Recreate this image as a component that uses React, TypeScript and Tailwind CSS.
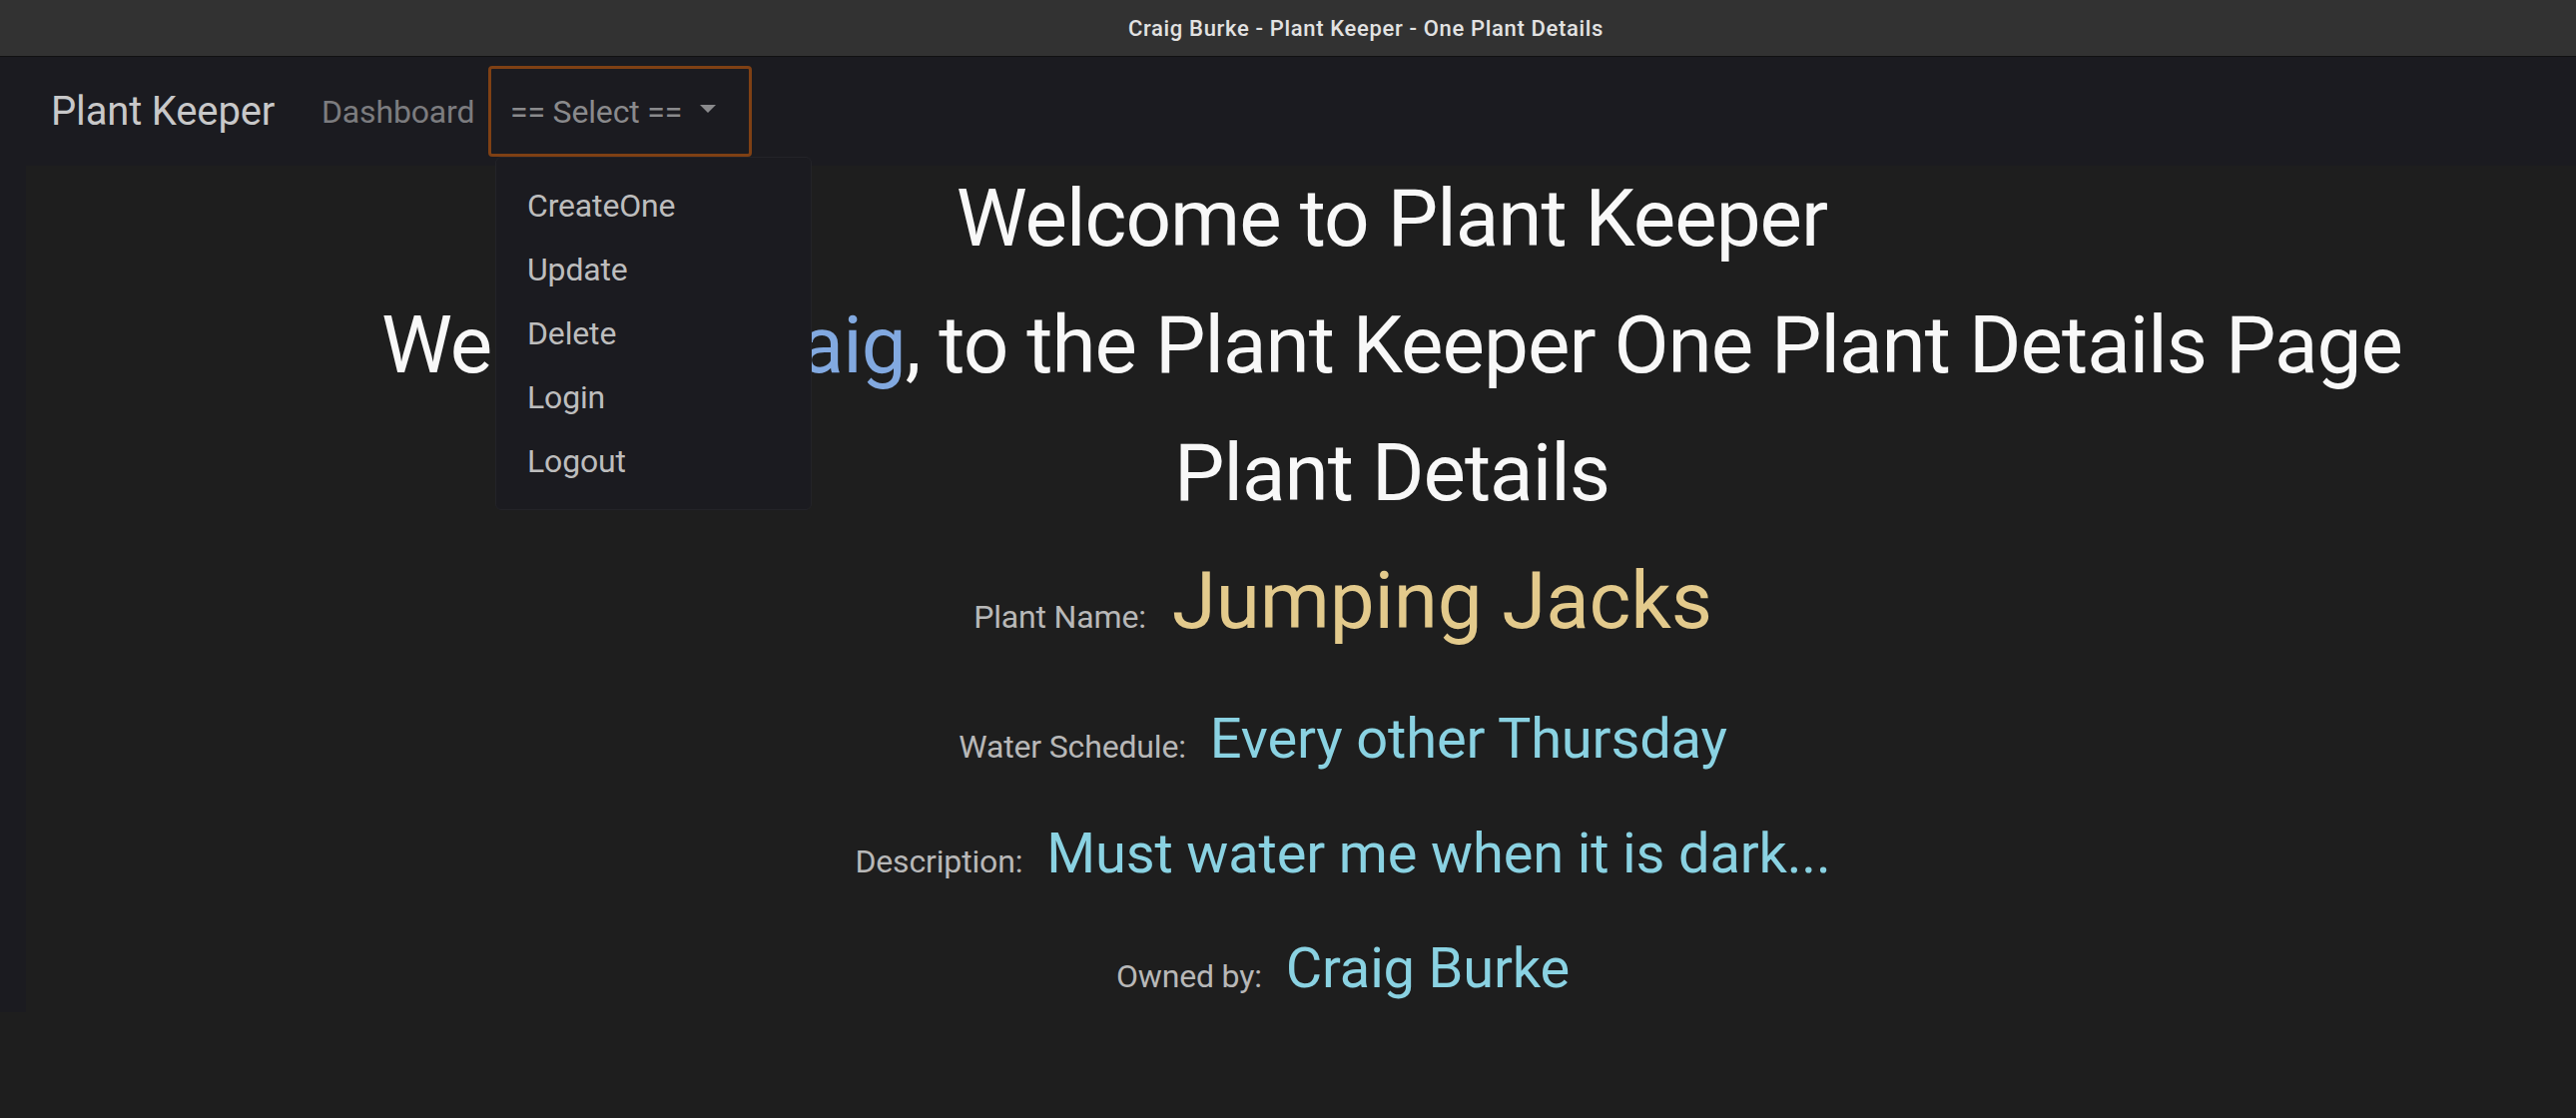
const menuItems = ["CreateOne", "Update", "Delete", "Login", "Logout"];

function DetailRow({
    label,
    value,
    big,
    className,
}: {
    label: string;
    value: string;
    big?: boolean;
    className?: string;
}) {
    return (
        <div className={`flex items-baseline justify-center ${className ?? ""}`}>
            <span className="text-[32px] leading-[48px] text-[#b8b8b8]">{label}</span>
            <span
                className={
                    big
                        ? "ml-[26px] text-[80px] leading-[96px] text-[#e3ca8c]"
                        : "ml-[24px] text-[56px] leading-[67px] text-[#8ad2e2]"
                }
            >
                {value}
            </span>
        </div>
    );
}

export default function App() {
    return (
        <div className="min-h-screen bg-[#1e1e1e] font-[family-name:Roboto,'Liberation_Sans',sans-serif] tracking-[-0.01em]">
            {/* Window title bar */}
            <div className="h-[57px] bg-[#323232] border-b border-[#111111] flex items-center pl-[156px] justify-center">
                <span className="text-[22px] font-medium tracking-[0.03em] text-[#e2e2e2]">
                    Craig Burke - Plant Keeper - One Plant Details
                </span>
            </div>

            <div className="bg-[#1b1b20]">
                {/* Navbar */}
                <nav className="h-[109px] flex items-center pl-[51px]">
                    <span className="w-[220px] shrink-0 whitespace-nowrap text-[40px] leading-[60px] text-[#c8c8c9]">Plant Keeper</span>
                    <span className="ml-[51px] w-[155px] shrink-0 whitespace-nowrap text-[32px] leading-[48px] text-[#7c7c7f]">Dashboard</span>
                    <div className="relative ml-[12px]">
                        <div className="w-[264px] h-[91px] border-[3px] border-[#7f4014] rounded-[4px] flex items-center pl-[19px]">
                            <span className="text-[32px] leading-[48px] text-[#8a8a8c]">== Select ==</span>
                            <span className="ml-[18px] mt-[-6px] w-0 h-0 border-t-[8px] border-x-[8px] border-t-[#8a8a8c] border-x-transparent" />
                        </div>
                        {/* Open dropdown menu */}
                        <div className="absolute left-[7px] top-[91px] z-10 w-[317px] py-[16px] rounded-[6px] bg-[#1b1b20] border border-[#232328]">
                            {menuItems.map((item) => (
                                <div key={item} className="h-[64px] py-[8px] pl-[31px] text-[32px] leading-[48px] text-[#bdbdbd]">
                                    {item}
                                </div>
                            ))}
                        </div>
                    </div>
                </nav>

                {/* Content */}
                <div className="ml-[26px] bg-[#1e1e1e] pt-[5px] pb-[10px]">
                    <div className="pl-[182px] text-center text-[80px] leading-[96px] tracking-[-0.012em] text-[#f8f8f8]">
                        <h1>Welcome to Plant Keeper</h1>
                        <h2 className="mt-[31px]">
                            Welcome <span className="text-[#82a9e0]">Craig</span>, to the Plant Keeper One Plant Details Page
                        </h2>
                        <h3 className="mt-[32px]">Plant Details</h3>
                    </div>
                    <div className="pl-[84px]">
                        <DetailRow className="mt-[32px]" label="Plant Name:" value="Jumping Jacks" big />
                        <DetailRow className="mt-[57px]" label="Water Schedule:" value="Every other Thursday" />
                        <DetailRow className="mt-[48px]" label="Description:" value="Must water me when it is dark..." />
                        <DetailRow className="mt-[48px]" label="Owned by:" value="Craig Burke" />
                    </div>
                </div>
            </div>
        </div>
    );
}
